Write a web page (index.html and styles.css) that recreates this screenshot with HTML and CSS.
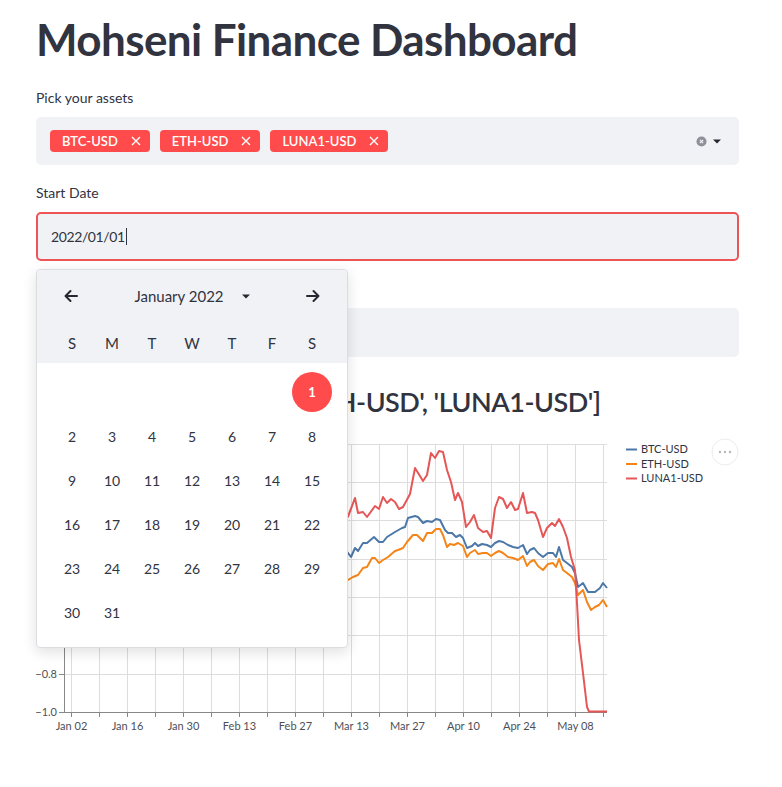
FILE: index.html
```html
<!DOCTYPE html>
<html lang="en">
<head>
<meta charset="utf-8">
<title>Mohseni Finance Dashboard</title>
<link rel="stylesheet" href="styles.css">
</head>
<body>
<main class="app">
  <h1 class="title">Mohseni Finance Dashboard</h1>

  <div class="field">
    <label class="label">Pick your assets</label>
    <div class="select">
      <div class="tags">
        <span class="tag">BTC-USD<svg class="tag-x" viewBox="0 0 10 10"><path d="M1 1L9 9M9 1L1 9"/></svg></span>
        <span class="tag">ETH-USD<svg class="tag-x" viewBox="0 0 10 10"><path d="M1 1L9 9M9 1L1 9"/></svg></span>
        <span class="tag">LUNA1-USD<svg class="tag-x" viewBox="0 0 10 10"><path d="M1 1L9 9M9 1L1 9"/></svg></span>
      </div>
      <div class="select-icons">
        <svg class="clear" viewBox="0 0 12 12"><circle cx="6" cy="6" r="5.5"/><path d="M4.2 4.2l3.6 3.6M7.8 4.2l-3.6 3.6"/></svg>
        <svg class="caret" viewBox="0 0 8 5"><path d="M0 0.5h8L4 4.5z"/></svg>
      </div>
    </div>
  </div>

  <div class="field field-popover">
    <label class="label">Start Date</label>
    <div class="input input-focus"><span class="input-text">2022/01/01</span><span class="cursor"></span></div>

    <div class="calendar">
      <div class="cal-head">
        <div class="cal-nav">
          <svg class="cal-arrow" viewBox="0 0 16 16"><path d="M14 8H2.5M7.5 3L2.5 8l5 5"/></svg>
          <div class="cal-month">January 2022 <svg class="cal-caret" viewBox="0 0 8 5"><path d="M0 0.5h8L4 4.5z"/></svg></div>
          <svg class="cal-arrow" viewBox="0 0 16 16"><path d="M2 8h11.5M8.5 3l5 5-5 5"/></svg>
        </div>
        <div class="cal-dow">
          <span>S</span><span>M</span><span>T</span><span>W</span><span>T</span><span>F</span><span>S</span>
        </div>
      </div>
      <div class="cal-body">
        <span></span><span></span><span></span><span></span><span></span><span></span><span class="day-selected">1</span>
        <span>2</span><span>3</span><span>4</span><span>5</span><span>6</span><span>7</span><span>8</span>
        <span>9</span><span>10</span><span>11</span><span>12</span><span>13</span><span>14</span><span>15</span>
        <span>16</span><span>17</span><span>18</span><span>19</span><span>20</span><span>21</span><span>22</span>
        <span>23</span><span>24</span><span>25</span><span>26</span><span>27</span><span>28</span><span>29</span>
        <span>30</span><span>31</span>
      </div>
    </div>
  </div>

  <div class="field">
    <label class="label">End Date</label>
    <div class="input"><span class="input-text">2022/05/13</span></div>
  </div>

  <h2 class="subheader">Returns of ['BTC-USD', 'ETH-USD', 'LUNA1-USD']</h2>

  <div class="chart">
    <svg class="chart-svg" width="703" height="305" viewBox="0 0 703 305">
      <g transform="translate(-36 -435)">
        <path class="grid" d="M71.5 444V712M99.5 444V712M127.5 444V712M155.5 444V712M183.5 444V712M211.5 444V712M239.5 444V712M267.5 444V712M295.5 444V712M323.5 444V712M351.5 444V712M379.5 444V712M407.5 444V712M435.5 444V712M463.5 444V712M491.5 444V712M519.5 444V712M547.5 444V712M575.5 444V712M603.5 444V712M64 444.5H607M64 482.5H607M64 520.5H607M64 559.5H607M64 597.5H607M64 635.5H607M64 674.5H607"/>
        <path class="axis" d="M64.5 444V713M64 712.5H607M59 444.5H64M59 482.5H64M59 520.5H64M59 559.5H64M59 597.5H64M59 635.5H64M59 674.5H64M59 712.5H64M71.5 712V717M99.5 712V717M127.5 712V717M155.5 712V717M183.5 712V717M211.5 712V717M239.5 712V717M267.5 712V717M295.5 712V717M323.5 712V717M351.5 712V717M379.5 712V717M407.5 712V717M435.5 712V717M463.5 712V717M491.5 712V717M519.5 712V717M547.5 712V717M575.5 712V717M603.5 712V717"/>
        <g class="ylabels">
          <text x="57" y="448">0.4</text>
          <text x="57" y="486">0.2</text>
          <text x="57" y="524">0.0</text>
          <text x="57" y="563">−0.2</text>
          <text x="57" y="601">−0.4</text>
          <text x="57" y="639">−0.6</text>
          <text x="57" y="678">−0.8</text>
          <text x="57" y="716">−1.0</text>
        </g>
        <g class="xlabels">
          <text x="71.5" y="730">Jan 02</text>
          <text x="127.5" y="730">Jan 16</text>
          <text x="183.5" y="730">Jan 30</text>
          <text x="239.5" y="730">Feb 13</text>
          <text x="295.5" y="730">Feb 27</text>
          <text x="351.5" y="730">Mar 13</text>
          <text x="407.5" y="730">Mar 27</text>
          <text x="463.5" y="730">Apr 10</text>
          <text x="519.5" y="730">Apr 24</text>
          <text x="575.5" y="730">May 08</text>
        </g>
        <path class="line btc" d="M67.7 520.6L80 525L95 535L110 545L125 560L140 565L160 555L180 552L200 545L220 548L240 540L260 535L280 540L300 535L320 545L335 540L348 553L351 557L355 548L358 551L363 543L367 543L374 537L379 542L383 542L387 537L395 532L402 528L405 527L408 518L415 516L418 517L423 523L427 521L432 522L436 519L440 520L445 530L448 533L452 533L456 537L460 535L463 538L467 548L472 546L475 543L478 546L482 544L487 545L491 547L495 543L499 541L503 542L508 545L513 547L518 548L523 545L527 554L530 550L534 548L538 553L543 557L548 553L553 553L556 557L559 547L563 560L567 563L572 567L575 573L578 587L583 583L588 592L595 592L600 588L603 583L607 588"/>
        <path class="line eth" d="M67.7 520.6L80 530L95 545L110 560L125 580L140 590L160 580L180 575L200 565L220 570L240 560L260 555L280 562L300 560L320 570L335 568L348 580L353 577L358 575L363 568L367 567L372 558L375 558L379 563L383 560L388 557L395 551L398 550L403 548L407 542L413 535L417 535L423 541L427 533L432 533L436 529L440 529L443 535L447 547L450 544L454 545L458 543L463 546L467 557L470 553L475 550L478 554L483 553L487 553L491 556L495 553L499 551L503 553L508 557L513 558L518 560L523 556L527 566L530 562L534 560L538 566L543 570L548 564L553 563L556 567L559 559L563 570L567 573L572 577L575 583L578 595L583 590L587 602L591 610L595 607L599 605L603 600L607 607"/>
        <path class="line luna" d="M67.7 520.6L80 530L95 545L110 560L125 575L140 585L160 560L180 555L200 540L220 545L240 530L260 520L280 525L300 510L320 515L335 500L348 516.7L355 498L358 513L363 512L367 517L375 506L379 509L383 497L387 503L391 499L395 502L399 509L403 507L410 494L415 468L423 481L427 475L431 453L435 458L439 451L443 452L447 470L451 482L455 500L458 493L462 502L466 527L470 522L474 515L478 528L483 532L487 531L491 538L495 508L499 497L503 499L507 508L511 502L515 510L518 509L523 493L527 513L532 512L535 513L538 520L543 537L547 528L552 523L555 526L559 519L563 527L567 538L571 557L575 570L577 603L579 640L583 673L587 707L589 711.5L607 711.5"/>
        <g class="legend">
          <path class="btc-s" d="M626 449.5H637"/>
          <path class="eth-s" d="M626 464H637"/>
          <path class="luna-s" d="M626 478.5H637"/>
          <text x="641" y="453">BTC-USD</text>
          <text x="641" y="467.5">ETH-USD</text>
          <text x="641" y="482">LUNA1-USD</text>
        </g>
        <g class="menu">
          <circle cx="725" cy="452" r="13"/>
          <circle class="dot" cx="720" cy="452" r="1.2"/>
          <circle class="dot" cx="725" cy="452" r="1.2"/>
          <circle class="dot" cx="730" cy="452" r="1.2"/>
        </g>
      </g>
    </svg>
  </div>
</main>
</body>
</html>
```

FILE: styles.css
```css
* {
  box-sizing: border-box;
}

body {
  margin: 0;
  background: #ffffff;
  color: #31333f;
  font-family: Lato, "Noto Sans", "Liberation Sans", sans-serif;
}

.app {
  width: 703px;
  margin-left: 36px;
  display: flex;
  flex-direction: column;
  gap: 16px;
}

.title {
  margin: 0;
  padding: 13px 0 4px;
  font-size: 44px;
  line-height: 53px;
  font-weight: 700;
  letter-spacing: -0.6px;
  color: #31333f;
}

.field {
  display: flex;
  flex-direction: column;
}

.field-popover {
  position: relative;
  z-index: 5;
}

.label {
  font-size: 14px;
  line-height: 24px;
  margin-bottom: 7px;
  color: #31333f;
}

.select {
  height: 48px;
  background: #f0f2f6;
  border-radius: 5px;
  display: flex;
  align-items: center;
  padding: 0 18px 0 14px;
}

.tags {
  flex: 1;
  display: flex;
  gap: 10px;
}

.tag {
  height: 22px;
  display: inline-flex;
  align-items: center;
  padding: 0 9px 0 12px;
  background: #ff4b4b;
  color: #ffffff;
  border-radius: 4px;
  font-size: 13px;
  font-weight: 600;
}

.tag-x {
  width: 10px;
  height: 10px;
  margin-left: 13px;
  fill: none;
  stroke: #ffffff;
  stroke-width: 1.4;
}

.select-icons {
  display: flex;
  align-items: center;
  gap: 6px;
}

.clear {
  width: 11px;
  height: 11px;
}

.clear circle {
  fill: #8d9099;
}

.clear path {
  stroke: #f0f2f6;
  stroke-width: 1.3;
  fill: none;
}

.caret {
  width: 8px;
  height: 5px;
  fill: #262730;
}

.input {
  height: 49px;
  background: #f0f2f6;
  border: 2px solid #f0f2f6;
  border-radius: 5px;
  display: flex;
  align-items: center;
  padding-left: 13px;
  font-size: 14px;
  color: #31333f;
}

.input-text {
  letter-spacing: -0.4px;
}

.input-focus {
  border-color: #ee5356;
}

.cursor {
  width: 1px;
  height: 17px;
  margin-left: 1px;
  background: #31333f;
}

.calendar {
  position: absolute;
  top: 88px;
  left: 0;
  width: 312px;
  background: #ffffff;
  border: 1px solid #dcdde1;
  border-radius: 4px;
  box-shadow: 0 4px 14px rgba(0, 0, 0, 0.13);
  overflow: hidden;
}

.cal-head {
  background: #f0f2f6;
  padding-top: 11px;
}

.cal-nav {
  height: 30px;
  display: flex;
  align-items: center;
  justify-content: space-between;
  padding: 0 26px;
}

.cal-arrow {
  width: 16px;
  height: 16px;
  fill: none;
  stroke: #262730;
  stroke-width: 2;
  stroke-linecap: round;
  stroke-linejoin: round;
}

.cal-month {
  display: flex;
  align-items: center;
  gap: 18px;
  font-size: 15px;
  color: #31333f;
}

.cal-caret {
  width: 8px;
  height: 5px;
  fill: #262730;
}

.cal-dow {
  margin-top: 12px;
  height: 40px;
  display: grid;
  grid-template-columns: repeat(7, 40px);
  padding: 0 15px;
  align-items: center;
  justify-items: center;
  font-size: 15px;
  color: #31333f;
}

.cal-body {
  display: grid;
  grid-template-columns: repeat(7, 40px);
  grid-auto-rows: 40px;
  row-gap: 4px;
  padding: 9px 15px 15px;
  font-size: 14px;
  color: #31333f;
}

.cal-body span {
  display: flex;
  align-items: center;
  justify-content: center;
}

.cal-body .day-selected {
  background: #ff4b4b;
  color: #ffffff;
  border-radius: 50%;
  font-weight: 700;
  font-size: 13px;
}

.subheader {
  margin: 0;
  padding-top: 12px;
  font-size: 27px;
  line-height: 34px;
  font-weight: 600;
  letter-spacing: -0.5px;
  white-space: nowrap;
  color: #31333f;
}

.chart {
  height: 305px;
}

.chart-svg {
  display: block;
}

.grid {
  stroke: #dddddd;
  stroke-width: 1;
  fill: none;
}

.axis {
  stroke: #888888;
  stroke-width: 1;
  fill: none;
}

.ylabels text {
  font-size: 11px;
  fill: #4d4f58;
  text-anchor: end;
  font-family: Lato, "Noto Sans", sans-serif;
}

.xlabels text {
  font-size: 11px;
  fill: #4d4f58;
  text-anchor: middle;
  font-family: Lato, "Noto Sans", sans-serif;
}

.line {
  fill: none;
  stroke-width: 2;
  stroke-linejoin: round;
}

.btc {
  stroke: #4c78a8;
}

.eth {
  stroke: #f58518;
}

.luna {
  stroke: #e45756;
}

.legend path {
  stroke-width: 2;
}

.btc-s {
  stroke: #4c78a8;
}

.eth-s {
  stroke: #f58518;
}

.luna-s {
  stroke: #e45756;
}

.legend text {
  font-size: 11px;
  fill: #31333f;
  font-family: Lato, "Noto Sans", sans-serif;
}

.menu circle {
  fill: #ffffff;
  stroke: #ececec;
  stroke-width: 1;
}

.menu .dot {
  fill: #b7b7b7;
  stroke: none;
}
```
